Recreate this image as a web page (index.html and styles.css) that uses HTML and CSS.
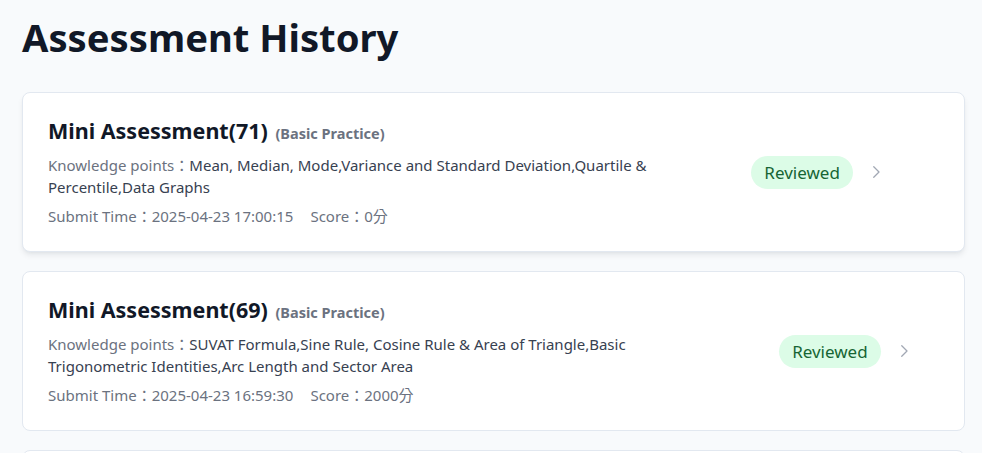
FILE: index.html
```html
<!DOCTYPE html>
<html lang="en">
<head>
<meta charset="utf-8">
<title>Assessment History</title>
<link rel="stylesheet" href="styles.css">
</head>
<body>
<main class="page">
  <h1 class="page-title">Assessment History</h1>
  <div class="list">
    <article class="card card--active">
      <div class="card-main">
        <h2 class="card-title">Mini Assessment(71) <span class="card-type">(Basic Practice)</span></h2>
        <p class="card-points"><span class="label">Knowledge points<span class="colon">：</span></span>Mean, Median, Mode,Variance and Standard Deviation,Quartile &amp; Percentile,Data Graphs</p>
        <p class="card-meta"><span>Submit Time<span class="colon">：</span>2025-04-23 17:00:15</span><span>Score<span class="colon">：</span>0分</span></p>
      </div>
      <div class="card-side">
        <span class="badge">Reviewed</span>
        <svg class="chevron" viewBox="0 0 24 24" aria-hidden="true"><path d="M9 5l7 7-7 7"/></svg>
      </div>
    </article>
    <article class="card">
      <div class="card-main">
        <h2 class="card-title">Mini Assessment(69) <span class="card-type">(Basic Practice)</span></h2>
        <p class="card-points"><span class="label">Knowledge points<span class="colon">：</span></span>SUVAT Formula,Sine Rule, Cosine Rule &amp; Area of Triangle,Basic Trigonometric Identities,Arc Length and Sector Area</p>
        <p class="card-meta"><span>Submit Time<span class="colon">：</span>2025-04-23 16:59:30</span><span>Score<span class="colon">：</span>2000分</span></p>
      </div>
      <div class="card-side">
        <span class="badge">Reviewed</span>
        <svg class="chevron" viewBox="0 0 24 24" aria-hidden="true"><path d="M9 5l7 7-7 7"/></svg>
      </div>
    </article>
    <article class="card">
      <div class="card-main">
        <h2 class="card-title">Mini Assessment(68) <span class="card-type">(Basic Practice)</span></h2>
        <p class="card-points"><span class="label">Knowledge points<span class="colon">：</span></span>Mean, Median, Mode,Variance and Standard Deviation</p>
        <p class="card-meta"><span>Submit Time<span class="colon">：</span>2025-04-23 16:58:02</span><span>Score<span class="colon">：</span>0分</span></p>
      </div>
      <div class="card-side">
        <span class="badge">Reviewed</span>
        <svg class="chevron" viewBox="0 0 24 24" aria-hidden="true"><path d="M9 5l7 7-7 7"/></svg>
      </div>
    </article>
  </div>
</main>
</body>
</html>
```
FILE: styles.css
```css
* { box-sizing: border-box; }
html, body {
  margin: 0;
  background: #f8fafc;
}
body {
  font-family: "Noto Sans", "Noto Sans CJK TC", sans-serif;
  color: #111827;
}
.page {
  padding: 11px 17px 0 22px;
}
.page-title {
  margin: 0;
  font-size: 38.2px;
  line-height: 52px;
  font-weight: 700;
  color: #111827;
}
.list {
  margin-top: 29px;
  display: flex;
  flex-direction: column;
  gap: 19px;
}
.card {
  display: flex;
  align-items: center;
  background: #ffffff;
  border: 1px solid #e2e8f0;
  border-radius: 8px;
  padding: 24px 25px 24px 25px;
}
.card--active {
  box-shadow: 0 4px 6px -1px rgba(15, 23, 42, 0.08), 0 2px 4px -2px rgba(15, 23, 42, 0.06);
}
.card-main {
  flex: 0 1 auto;
  min-width: 0;
}
.card-title {
  margin: 0;
  font-size: 21.5px;
  line-height: 28px;
  font-weight: 700;
  color: #111827;
}
.card-type {
  font-size: 14.5px;
  font-weight: 700;
  color: #6b7280;
  margin-left: 2px;
}
.colon {
  font-family: "Noto Sans CJK TC", sans-serif;
}
.card-points {
  margin: 7px 0 0;
  padding-right: 64px;
  font-size: 15px;
  line-height: 22px;
  color: #374151;
}
.label { color: #6b7280; }
.card-meta {
  margin: 7px 0 0;
  font-size: 15px;
  line-height: 22px;
  color: #6b7280;
  display: flex;
  gap: 17px;
}
.card-side {
  flex: 0 1 221px;
  min-width: 0;
  display: flex;
  align-items: center;
  gap: 14px;
}
.badge {
  flex: none;
  white-space: nowrap;
  background: #dcfce7;
  color: #166534;
  font-size: 17px;
  line-height: 33px;
  padding: 0 13px;
  border-radius: 999px;
}
.chevron {
  flex: none;
  width: 18px;
  height: 18px;
  fill: none;
  stroke: #a1a7b3;
  stroke-width: 1.7;
  stroke-linecap: round;
  stroke-linejoin: round;
}
```
